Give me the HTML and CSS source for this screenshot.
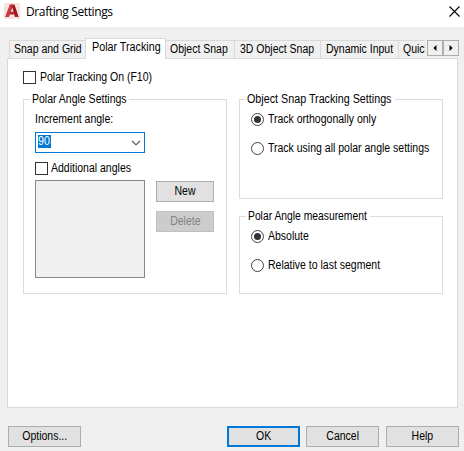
FILE: index.html
```html
<!DOCTYPE html>
<html lang="en">
<head>
<meta charset="utf-8">
<title>Drafting Settings</title>
<link rel="stylesheet" href="styles.css">
</head>
<body>
<div class="dialog">
  <header class="titlebar">
    <svg class="logo" width="16" height="16" viewBox="0 0 16 16">
      <rect width="16" height="16" fill="#f8e2de"/>
      <path d="M1.3 14 6 1.5h4.3L14.6 14h-3.8l-.8-2.6H5.8L4.8 14z" fill="#b8242b"/>
      <path d="M1.3 14 6 1.5h2.2L4.8 14z" fill="#cf3a3c"/>
      <path d="M10.3 1.5 14.6 14l-3-2L8.5 4z" fill="#941a20"/>
      <path d="M6.7 8.8 8.2 4.4l1.3 4.4z" fill="#f6dedb"/>
    </svg>
    <h1 class="title">Drafting Settings</h1>
    <svg class="close" width="11" height="11" viewBox="0 0 11 11"><path d="M.5.5l10 10M10.5.5l-10 10" fill="none" stroke="#000" stroke-width="1.1"/></svg>
  </header>
  <nav class="tabs">
    <span class="tab tab-snap"><span class="text">Snap and Grid</span></span>
    <span class="tab active"><span class="text wide">Polar Tracking</span></span>
    <span class="tab tab-object"><span class="text">Object Snap</span></span>
    <span class="tab tab-3d"><span class="text">3D Object Snap</span></span>
    <span class="tab tab-dynamic"><span class="text">Dynamic Input</span></span>
    <span class="tab tab-quick"><span class="text">Quick</span></span>
    <span class="scroll">
      <span class="arrow"><svg width="4" height="6" viewBox="0 0 4 6"><path d="M3.5 0v6L.3 3z"/></svg></span>
      <span class="arrow"><svg width="4" height="6" viewBox="0 0 4 6"><path d="M.5 0v6l3.2-3z"/></svg></span>
    </span>
  </nav>
  <main class="panel">
    <label class="choice"><span class="check"></span><span class="text">Polar Tracking On (F10)</span></label>
    <div class="columns">
      <section class="group left">
        <h2 class="legend"><span class="text">Polar Angle Settings</span></h2>
        <div class="increment"><span class="text">Increment angle:</span></div>
        <div class="combo"><span class="selection"><span class="text wide">90</span></span><svg class="chevron" width="10" height="6" viewBox="0 0 10 6"><path d="M1 .8l4 4 4-4" fill="none" stroke="#444" stroke-width="1.1"/></svg></div>
        <label class="choice additional"><span class="check"></span><span class="text">Additional angles</span></label>
        <div class="angles">
          <div class="list"></div>
          <div class="actions">
            <span class="button small"><span class="text">New</span></span>
            <span class="button small disabled"><span class="text">Delete</span></span>
          </div>
        </div>
      </section>
      <div class="right">
        <section class="group tracking">
          <h2 class="legend"><span class="text wide">Object Snap Tracking Settings</span></h2>
          <label class="choice first"><span class="radio on"></span><span class="text">Track orthogonally only</span></label>
          <label class="choice second"><span class="radio"></span><span class="text">Track using all polar angle settings</span></label>
        </section>
        <section class="group measurement">
          <h2 class="legend"><span class="text narrow">Polar Angle measurement</span></h2>
          <label class="choice first"><span class="radio on"></span><span class="text">Absolute</span></label>
          <label class="choice second"><span class="radio"></span><span class="text">Relative to last segment</span></label>
        </section>
      </div>
    </div>
  </main>
  <footer class="footer">
    <span class="button options"><span class="text">Options...</span></span>
    <span class="button primary"><span class="text">OK</span></span>
    <span class="button cancel"><span class="text">Cancel</span></span>
    <span class="button"><span class="text">Help</span></span>
  </footer>
</div>
</body>
</html>
```
FILE: styles.css
```css
* { box-sizing: border-box; }
body { margin: 0; font: 12px/13px "Liberation Sans", Arial, sans-serif; color: #000; }
.dialog { width: 464px; height: 451px; background: #f0f0f0; display: flex; flex-direction: column; overflow: hidden; white-space: nowrap; }
.titlebar { height: 27px; background: #fff; display: flex; align-items: flex-start; padding: 3px 4px 0; }
.title { margin: 1px auto 0 6px; font: 400 12px/16px "Open Sans", "Noto Sans", sans-serif; letter-spacing: -0.38px; }
.close { margin-top: 3px; }

/* condensed dialog lettering */
.text { display: inline-block; transform: scaleX(.875); transform-origin: left center; }
.text.wide { transform: scaleX(.895); }
.text.narrow { transform: scaleX(.86); }

.tabs { display: flex; align-items: flex-start; margin-top: 11px; height: 20px; padding-left: 9px; position: relative; z-index: 1; }
.tab { height: 18px; margin-top: 2px; border-top: 1px solid #d9d9d9; border-right: 1px solid #d9d9d9; padding: 2px 0 0 5px; overflow: hidden; }
.tab-snap { width: 76px; border-left: 1px solid #d9d9d9; padding-left: 4px; border-right: 0; }
.tab.active { width: 81px; height: 21px; margin-top: 0; background: #fff; border-left: 1px solid #d9d9d9; padding: 2px 0 0 6px; }
.tab-object { width: 69px; padding-left: 4px; }
.tab-3d { width: 86px; }
.tab-dynamic { width: 78px; }
.tab-quick { width: 26px; margin-right: 2px; padding-left: 4px; border-right: 0; }
.scroll { display: flex; margin-top: 2px; }
.arrow { width: 16px; height: 16px; border: 1px solid #adadad; display: flex; align-items: center; justify-content: center; }

.panel { width: 451px; height: 350px; margin-left: 7px; background: #fff; border: 1px solid #d9d9d9; padding: 12px 14px 0 15px; }
.choice { display: flex; align-items: center; height: 13px; gap: 4px; }
.check { width: 13px; height: 13px; border: 1px solid #333; background: #fff; flex: none; }
.radio { width: 13px; height: 13px; border: 1px solid #444; border-radius: 50%; display: flex; align-items: center; justify-content: center; flex: none; }
.radio.on::before { content: ""; width: 7px; height: 7px; border-radius: 50%; background: #333; }
.columns { display: flex; gap: 12px; margin-top: 15px; }
.group { border: 1px solid #dcdcdc; }
.left { width: 204px; height: 195px; padding-left: 11px; }
.right { display: flex; flex-direction: column; gap: 17px; width: 204px; }
.tracking { height: 100px; padding-left: 11px; }
.measurement { height: 78px; padding-left: 11px; }
.legend { font: inherit; height: 13px; background: #fff; margin: -7px 0 0 -5px; padding-left: 2px; }
.left .legend { width: 99px; }
.tracking .legend { width: 149px; padding-left: 1px; }
.measurement .legend { width: 124px; }
.increment { margin-top: 7px; height: 13px; }
.combo { width: 110px; height: 21px; border: 1px solid #0078d7; margin-top: 6px; padding: 2px 3px 0 2px; display: flex; }
.selection { height: 13px; width: 13px; color: #fff; background: #0078d7; }
.chevron { margin: 5px 0 0 auto; }
.additional { margin-top: 9px; gap: 3px; }
.angles { display: flex; gap: 11px; margin-top: 5px; }
.list { width: 110px; height: 98px; border: 1px solid #828790; background: #f0f0f0; }
.actions { display: flex; flex-direction: column; gap: 9px; padding-top: 1px; }
.first { margin-top: 7px; }
.second { margin-top: 16px; }

.button { display: flex; align-items: center; justify-content: center; width: 73px; height: 21px; border: 1px solid #adadad; background: #e1e1e1; }
.button .text { transform-origin: center; }
.small { width: 58px; }
.disabled { color: #838383; background: #ccc; border-color: #bfbfbf; }
.primary { border: 2px solid #0078d7; }
.footer { display: flex; padding: 18px 5px 0 8px; }
.options { margin-right: 146px; }
.cancel { margin: 0 7px 0 6px; }
```
